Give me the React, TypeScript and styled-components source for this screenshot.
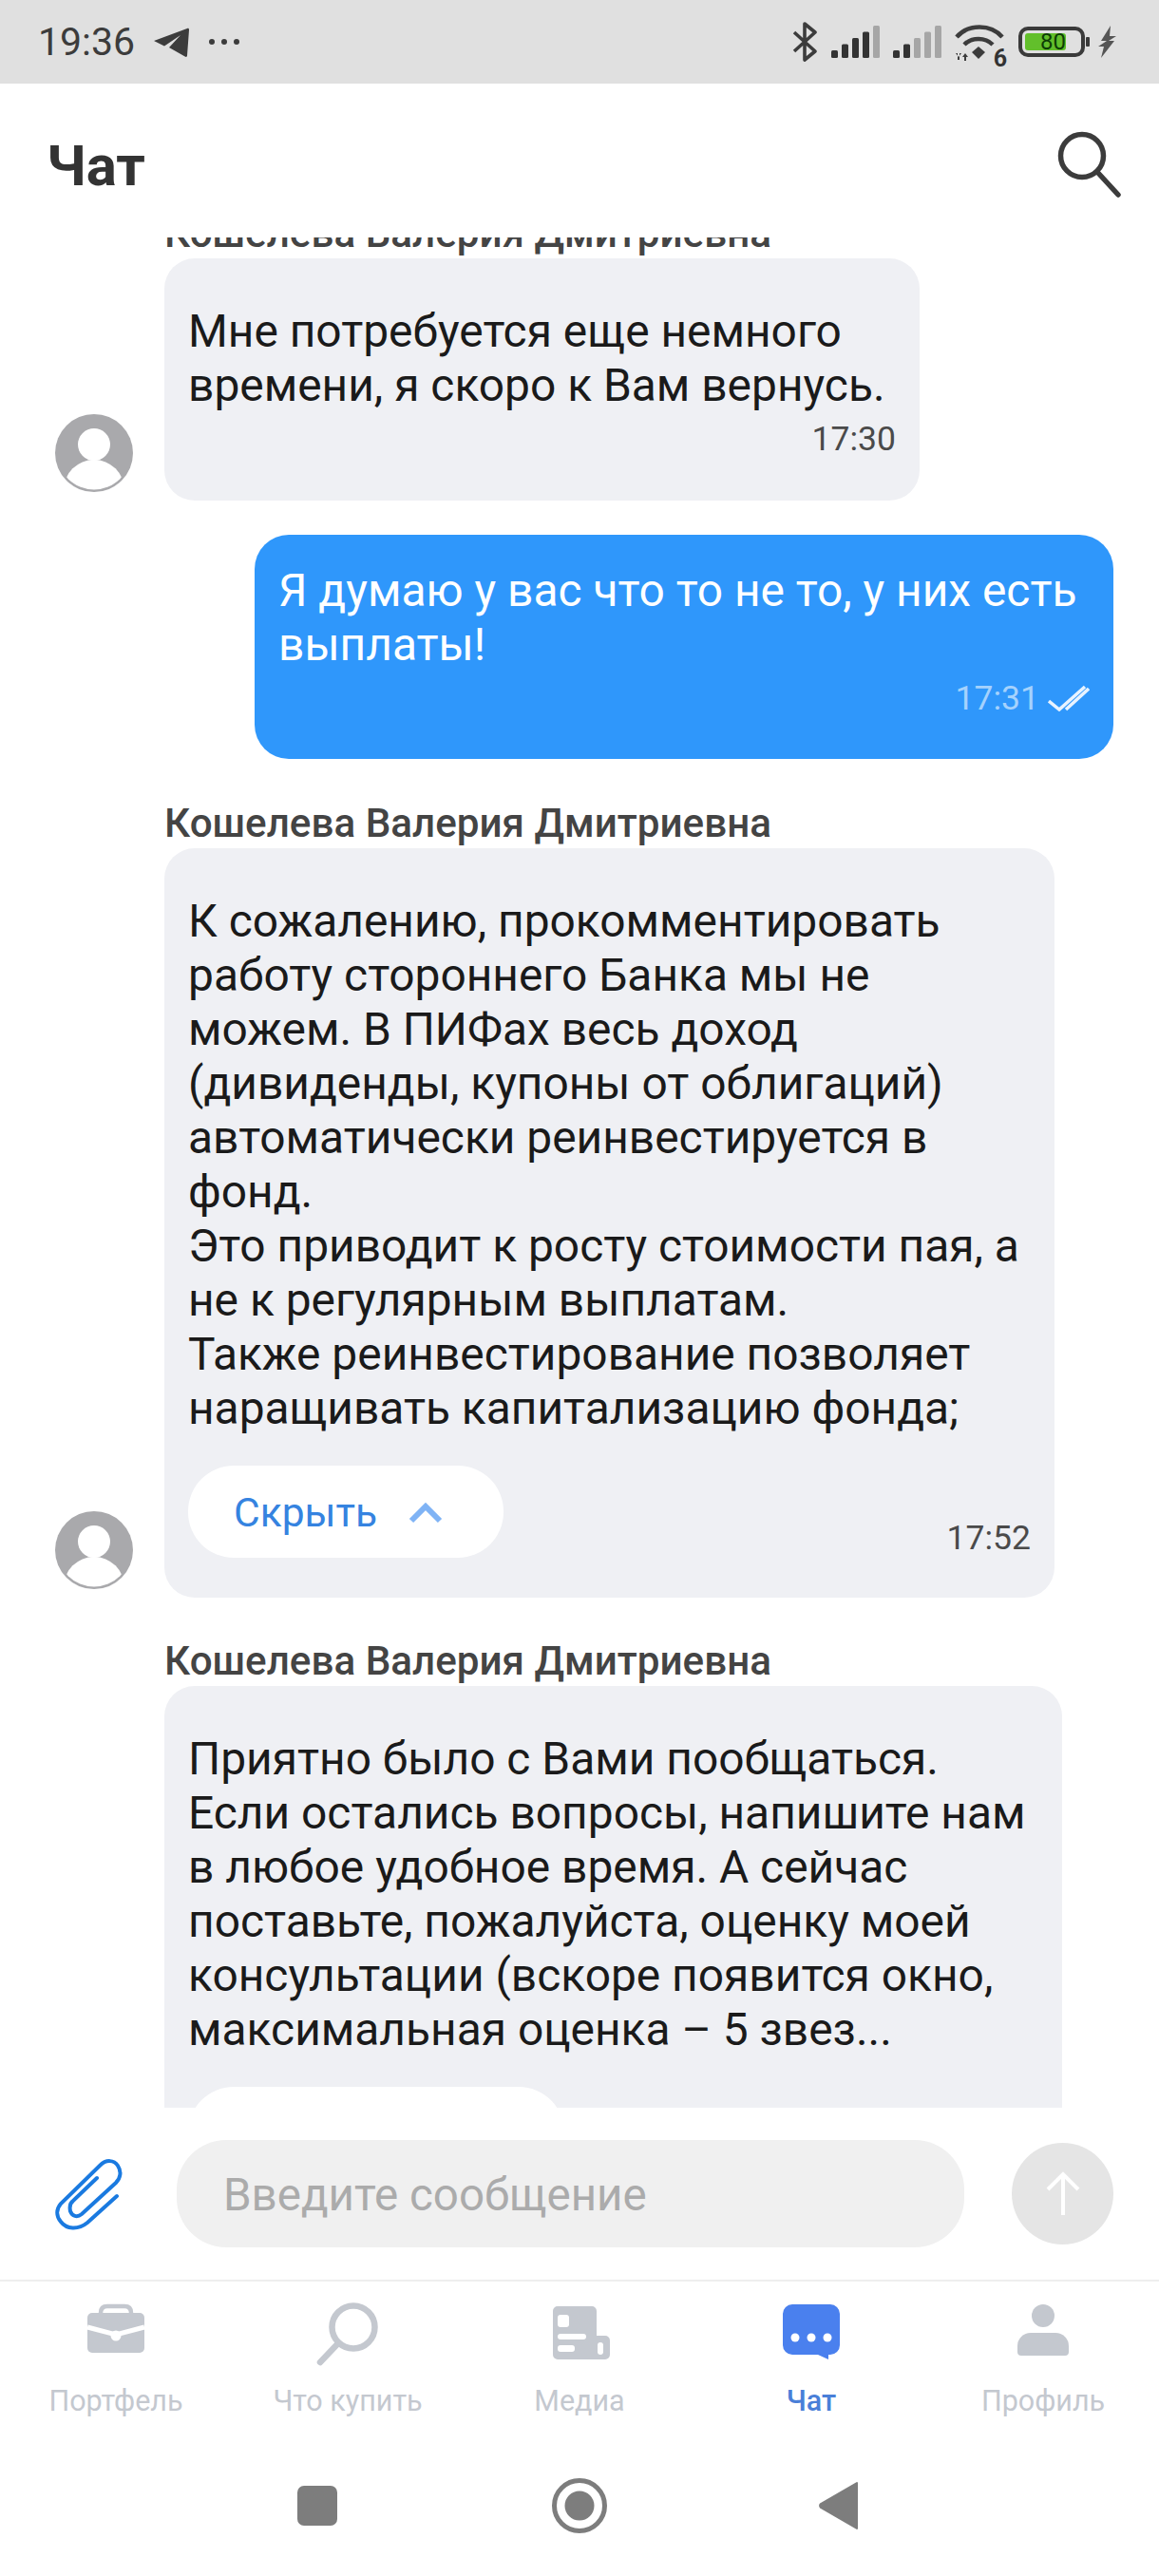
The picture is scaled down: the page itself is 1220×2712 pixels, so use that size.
import React from "react";
import styled, { createGlobalStyle } from "styled-components";

const GlobalStyle = createGlobalStyle`
    html, body {
        margin: 0;
        padding: 0;
        background: #fff;
    }
    body {
        font-family: Roboto, "Noto Sans", "Liberation Sans", sans-serif;
    }
`

const Screen = styled.div`
    width: 1220px;
    height: 2712px;
    display: flex;
    flex-direction: column;
    overflow: hidden;
    background: #fff;
`

const StatusBar = styled.div`
    height: 88px;
    flex: none;
    display: flex;
    align-items: center;
    padding: 0 45px 0 40px;
    background: #e0e0e0;
    color: #3c3c3c;
`

const StatusTime = styled.span`
    font-size: 41px;
    width: 122px;
    line-height: 88px;
`

const StatusDots = styled.span`
    display: flex;
    gap: 7px;
    margin-left: 21px;
    i {
        width: 6px;
        height: 6px;
        border-radius: 50%;
        background: #3c3c3c;
    }
`

const StatusRight = styled.div`
    margin-left: auto;
    display: flex;
    align-items: center;
    gap: 14px;
`

const WifiBox = styled.div`
    position: relative;
    width: 54px;
    height: 45px;
    margin-top: 9px;
    margin-right: -1px;
    svg {
        display: block;
    }
`

const WifiBadge = styled.span`
    position: absolute;
    right: -1px;
    bottom: -3px;
    font-size: 25px;
    line-height: 25px;
    font-weight: 700;
    color: #333;
`

const Battery = styled.div`
    width: 70px;
    height: 32px;
    box-sizing: border-box;
    border: 4px solid #3a3a3a;
    border-radius: 10px;
    padding: 3px;
    margin-right: -13px;
`

const BatteryFill = styled.div`
    width: 43px;
    height: 18px;
    border-radius: 3px;
    background: #62bf2b;
    color: #0d3d06;
    font-size: 24px;
    line-height: 19px;
    text-align: right;
`

const BatteryNub = styled.div`
    width: 4px;
    height: 10px;
    border-radius: 1px;
    background: #3a3a3a;
    margin-right: -5px;
`

const Header = styled.div`
    height: 162px;
    box-sizing: border-box;
    flex: none;
    display: flex;
    align-items: center;
    justify-content: space-between;
    padding: 8px 39px 0 49px;
`

const Title = styled.h1`
    margin: 2px 0 0;
    font-size: 60px;
    font-weight: 700;
    color: #333;
`

const ChatArea = styled.div`
    height: 1969px;
    flex: none;
    overflow: hidden;
`

const Track = styled.div`
    margin-top: -26px;
    display: flex;
    flex-direction: column;
`

const Incoming = styled.div<{ $gap?: number }>`
    display: flex;
    align-items: flex-end;
    gap: 33px;
    padding-left: 58px;
    margin-bottom: ${(p) => p.$gap ?? 45}px;
    > svg {
        flex: none;
        margin-bottom: 9px;
    }
`

const IncomingNoAvatar = styled.div`
    padding-left: 173px;
`

const Column = styled.div`
    display: flex;
    flex-direction: column;
`

const Name = styled.div`
    height: 44px;
    line-height: 44px;
    margin-bottom: 4px;
    font-size: 42.2px;
    font-weight: 500;
    color: #444;
`

const Bubble = styled.div<{ $width: number }>`
    width: ${(p) => p.$width}px;
    box-sizing: border-box;
    padding: 49px 25px 42px;
    border-radius: 32px;
    background: #eff0f4;
    color: #1a1a1a;
`

const OutgoingRow = styled.div`
    display: flex;
    justify-content: flex-end;
    padding-right: 48px;
    margin-bottom: 46px;
`

const OutgoingBubble = styled.div`
    width: 904px;
    height: 236px;
    box-sizing: border-box;
    padding: 31px 25px 0;
    border-radius: 36px;
    background: #2f97fb;
    color: #fff;
`

const MessageText = styled.div`
    font-size: 47.9px;
    line-height: 57px;
    white-space: pre-line;
`

const MetaRow = styled.div`
    display: flex;
    align-items: center;
    justify-content: flex-end;
    gap: 9px;
    margin-top: 8px;
    height: 38px;
`

const IncomingMetaRow = styled(MetaRow)`
    margin-bottom: 4px;
`

const Time = styled.span<{ $light?: boolean }>`
    font-size: 35.5px;
    line-height: 38px;
    color: ${(p) => (p.$light ? "#a5d2fd" : "#4a4a4a")};
`

const BubbleFooter = styled.div`
    display: flex;
    align-items: flex-end;
    justify-content: space-between;
    margin-top: 31px;
    ${Time} {
        margin-bottom: 2px;
    }
`

const Pill = styled.div<{ $width: number }>`
    width: ${(p) => p.$width}px;
    height: 97px;
    box-sizing: border-box;
    display: flex;
    align-items: center;
    gap: 33px;
    padding: 2px 0 0 48px;
    border-radius: 48px;
    background: #fff;
    color: #3583e0;
    font-size: 42.5px;
`

const Composer = styled.div`
    height: 181px;
    flex: none;
    display: flex;
    align-items: center;
    padding: 0 48px 0 58px;
`

const Input = styled.div`
    width: 829px;
    height: 113px;
    box-sizing: border-box;
    margin-left: 56px;
    padding: 2px 0 0 49px;
    display: flex;
    align-items: center;
    border-radius: 52px;
    background: #f0f0f0;
    color: #ababab;
    font-size: 47.5px;
`

const SendButton = styled.div`
    width: 107px;
    height: 107px;
    margin-left: 50px;
    border-radius: 50%;
    display: flex;
    align-items: center;
    justify-content: center;
    background: #e5e5e5;
`

const Tabs = styled.div`
    height: 162px;
    flex: none;
    display: grid;
    grid-template-columns: repeat(5, 1fr);
    border-top: 2px solid #eeeeee;
`

const Tab = styled.div<{ $active?: boolean }>`
    display: flex;
    flex-direction: column;
    align-items: center;
    padding-top: 22px;
    color: ${(p) => (p.$active ? "#4a7fd8" : "#c4c8cf")};
    font-size: 30.5px;
    font-weight: ${(p) => (p.$active ? 500 : 400)};
    svg {
        display: block;
    }
`

const TabLabel = styled.span`
    margin-top: 16px;
    line-height: 36px;
`

const NavBar = styled.div`
    flex: 1;
    display: flex;
    align-items: center;
    justify-content: center;
    gap: 215px;
    svg {
        display: block;
    }
`

const Avatar = () => (
    <svg width="82" height="82" viewBox="0 0 82 82">
        <defs>
            <clipPath id="avatar-clip">
                <circle cx="41" cy="41" r="38.5" />
            </clipPath>
        </defs>
        <circle cx="41" cy="41" r="41" fill="#a9a9ac" />
        <circle cx="41" cy="32" r="17" fill="#fff" />
        <circle cx="41" cy="80" r="32" fill="#fff" clipPath="url(#avatar-clip)" />
    </svg>
);

const Chevron = () => (
    <svg width="36" height="22" viewBox="0 0 36 22">
        <path d="M3 19 18 4l15 15" fill="none" stroke="#7fb3f5" strokeWidth="6" />
    </svg>
);

const DoubleCheck = () => (
    <svg width="44" height="28" viewBox="0 0 44 28">
        <path d="M1 17l11 9L39 2M19 26 43 4" fill="none" stroke="#e8f3ff" strokeWidth="3.5" />
    </svg>
);

const Telegram = () => (
    <svg width="37" height="31" viewBox="0 0 37 31">
        <path d="M0 14 35 1c1.500-.5 2 .3 2 1.500l-2 27c-.1 1.500-1.200 1.800-2.300 1L16 21 28 8 11 19.500z" fill="#3c3c3c" />
    </svg>
);

const Bluetooth = () => (
    <svg width="28" height="42" viewBox="0 0 28 42">
        <path d="M3 11l22 20-11 9V2l11 9L3 31" fill="none" stroke="#3c3c3c" strokeWidth="3.6" strokeLinejoin="round" />
    </svg>
);

// filled = how many of the five bars are dark
const Signal = ({ filled }: { filled: number }) => (
    <svg width="51" height="34" viewBox="0 0 51 34">
        {[0, 1, 2, 3, 4].map((i) => (
            <rect
                key={i}
                x={i * 11}
                y={26 - i * 6.5}
                width="7"
                height={8 + i * 6.5}
                rx="1.500"
                fill={i < filled ? "#333" : "#a6a6a6"}
            />
        ))}
    </svg>
);

const Wifi = () => (
    <WifiBox>
        <svg width="54" height="45" viewBox="0 0 54 45">
            <path d="M2 13C14 -1 38 -1 50 13M10 21C18 13 32 13 40 21" fill="none" stroke="#3c3c3c" strokeWidth="4.500" />
            <path d="M25 23l7 6-7 7-7-7z" fill="#3c3c3c" />
            <path d="M1 30h6l-3 4zM3 30v7h2v-7zM8 34l3-4 3 4zM10 32h2v6h-2z" fill="#3c3c3c" />
        </svg>
        <WifiBadge>6</WifiBadge>
    </WifiBox>
);

const Bolt = () => (
    <svg width="19" height="34" viewBox="0 0 19 34">
        <path d="M13 0 3 16h6L0 22h6L3 34l14-18h-6l8-5h-7z" fill="#555" />
    </svg>
);

const Search = () => (
    <svg width="68" height="70" viewBox="0 0 68 70">
        <circle cx="26" cy="26" r="22.500" fill="none" stroke="#3c3c3c" strokeWidth="5.500" />
        <path d="M42 43 64 67" stroke="#3c3c3c" strokeWidth="5.500" strokeLinecap="round" />
    </svg>
);

const Paperclip = () => (
    <svg width="72" height="78" viewBox="0 0 72 78">
        <path
            d="M65 41 34 69c-10 8-22 7-28-1-5-6-5-13 0-19L47 9c7-7 15-6 19 0 4 6 3 13-2 18L28 60c-5 4-10 2-12-3-1-5 0-9 3-11l25-24"
            fill="none"
            stroke="#1a7ae0"
            strokeWidth="4"
            strokeLinecap="round"
        />
    </svg>
);

const ArrowUp = () => (
    <svg width="40" height="48" viewBox="0 0 40 48">
        <path d="M20 46V3M4 19 20 3l16 16" fill="none" stroke="#fff" strokeWidth="4" />
    </svg>
);

const BriefcaseIcon = () => (
    <svg width="70" height="70" viewBox="-5 -2 70 70">
        <path d="M14 9c0-5 3-7 7-7h18c4 0 7 2 7 7" fill="none" stroke="#c4c8cf" strokeWidth="4.500" />
        <rect x="0" y="9" width="60" height="42" rx="5" fill="#c4c8cf" />
        <path d="M0 24 30 32 60 24" fill="none" stroke="#fff" strokeWidth="5" />
        <circle cx="30" cy="33" r="5.500" fill="#fff" />
    </svg>
);

const SearchTabIcon = () => (
    <svg width="70" height="70" viewBox="-3 -1 70 70">
        <circle cx="38" cy="25" r="22.500" fill="none" stroke="#c4c8cf" strokeWidth="6.500" />
        <path d="M22 42 3 62" stroke="#c4c8cf" strokeWidth="6.500" strokeLinecap="round" />
    </svg>
);

const MediaIcon = () => (
    <svg width="70" height="70" viewBox="-7 -4 70 70">
        <path d="M5 0h36a5 5 0 0 1 5 5v26h9a5 5 0 0 1 5 5v15a5 5 0 0 1-5 5H5a5 5 0 0 1-5-5V5a5 5 0 0 1 5-5z" fill="#c4c8cf" />
        <rect x="5" y="9" width="12" height="13" rx="3" fill="#fff" />
        <rect x="5" y="29" width="30" height="6" rx="3" fill="#fff" />
        <rect x="5" y="41" width="18" height="7" rx="3" fill="#fff" />
        <rect x="47" y="38" width="6" height="13" rx="3" fill="#fff" />
    </svg>
);

const ChatTabIcon = () => (
    <svg width="70" height="70" viewBox="-5 -2 70 70">
        <path d="M10 0h40a10 10 0 0 1 10 10v33a10 10 0 0 1-10 10h-2v5L37 53H10A10 10 0 0 1 0 43V10A10 10 0 0 1 10 0z" fill="#4a80ee" />
        <circle cx="13" cy="35" r="4.500" fill="#fff" />
        <circle cx="30" cy="35" r="4.500" fill="#fff" />
        <circle cx="47" cy="35" r="4.500" fill="#fff" />
    </svg>
);

const ProfileIcon = () => (
    <svg width="70" height="70" viewBox="-8 -2 70 70">
        <circle cx="27" cy="12" r="12" fill="#c4c8cf" />
        <path d="M14 30h26a14 14 0 0 1 14 14v6a4 4 0 0 1-4 4H4a4 4 0 0 1-4-4v-6a14 14 0 0 1 14-14z" fill="#c4c8cf" />
    </svg>
);

export default function App() {
    return (
        <Screen>
            <GlobalStyle />
            <StatusBar>
                <StatusTime>19:36</StatusTime>
                <Telegram />
                <StatusDots>
                    <i />
                    <i />
                    <i />
                </StatusDots>
                <StatusRight>
                    <Bluetooth />
                    <Signal filled={4} />
                    <Signal filled={2} />
                    <Wifi />
                    <Battery>
                        <BatteryFill>80</BatteryFill>
                    </Battery>
                    <BatteryNub />
                    <Bolt />
                </StatusRight>
            </StatusBar>
            <Header>
                <Title>Чат</Title>
                <Search />
            </Header>
            <ChatArea>
                <Track>
                    <Incoming $gap={36}>
                        <Avatar />
                        <Column>
                            <Name>Кошелева Валерия Дмитриевна</Name>
                            <Bubble $width={795}>
                                <MessageText>{"Мне потребуется еще немного\nвремени, я скоро к Вам вернусь."}</MessageText>
                                <IncomingMetaRow>
                                    <Time>17:30</Time>
                                </IncomingMetaRow>
                            </Bubble>
                        </Column>
                    </Incoming>
                    <OutgoingRow>
                        <OutgoingBubble>
                            <MessageText>{"Я думаю у вас что то не то, у них есть\nвыплаты!"}</MessageText>
                            <MetaRow>
                                <Time $light>17:31</Time>
                                <DoubleCheck />
                            </MetaRow>
                        </OutgoingBubble>
                    </OutgoingRow>
                    <Incoming>
                        <Avatar />
                        <Column>
                            <Name>Кошелева Валерия Дмитриевна</Name>
                            <Bubble $width={937}>
                                <MessageText>
                                    {"К сожалению, прокомментировать\nработу стороннего Банка мы не\nможем. В ПИФах весь доход\n(дивиденды, купоны от облигаций)\nавтоматически реинвестируется в\nфонд.\nЭто приводит к росту стоимости пая, а\nне к регулярным выплатам.\nТакже реинвестирование позволяет\nнаращивать капитализацию фонда;"}
                                </MessageText>
                                <BubbleFooter>
                                    <Pill $width={332}>
                                        Скрыть
                                        <Chevron />
                                    </Pill>
                                    <Time>17:52</Time>
                                </BubbleFooter>
                            </Bubble>
                        </Column>
                    </Incoming>
                    <IncomingNoAvatar>
                        <Name>Кошелева Валерия Дмитриевна</Name>
                        <Bubble $width={945}>
                            <MessageText>
                                {"Приятно было с Вами пообщаться.\nЕсли остались вопросы, напишите нам\nв любое удобное время. А сейчас\nпоставьте, пожалуйста, оценку моей\nконсультации (вскоре появится окно,\nмаксимальная оценка – 5 звез..."}
                            </MessageText>
                            <BubbleFooter>
                                <Pill $width={396} />
                            </BubbleFooter>
                        </Bubble>
                    </IncomingNoAvatar>
                </Track>
            </ChatArea>
            <Composer>
                <Paperclip />
                <Input>Введите сообщение</Input>
                <SendButton>
                    <ArrowUp />
                </SendButton>
            </Composer>
            <Tabs>
                <Tab>
                    <BriefcaseIcon />
                    <TabLabel>Портфель</TabLabel>
                </Tab>
                <Tab>
                    <SearchTabIcon />
                    <TabLabel>Что купить</TabLabel>
                </Tab>
                <Tab>
                    <MediaIcon />
                    <TabLabel>Медиа</TabLabel>
                </Tab>
                <Tab $active>
                    <ChatTabIcon />
                    <TabLabel>Чат</TabLabel>
                </Tab>
                <Tab>
                    <ProfileIcon />
                    <TabLabel>Профиль</TabLabel>
                </Tab>
            </Tabs>
            <NavBar>
                <svg width="60" height="60" viewBox="0 0 60 60">
                    <rect x="8" y="9" width="42" height="42" rx="7" fill="#7d7d7d" />
                </svg>
                <svg width="60" height="60" viewBox="0 0 60 60">
                    <circle cx="30" cy="30" r="26.500" fill="none" stroke="#7d7d7d" strokeWidth="5" />
                    <circle cx="30" cy="30" r="15.500" fill="#7d7d7d" />
                </svg>
                <svg width="60" height="60" viewBox="0 0 60 60">
                    <path d="M47 6v48L9 32a3 3 0 0 1 0-4z" fill="#7d7d7d" stroke="#7d7d7d" strokeWidth="2" strokeLinejoin="round" />
                </svg>
            </NavBar>
        </Screen>
    );
}
